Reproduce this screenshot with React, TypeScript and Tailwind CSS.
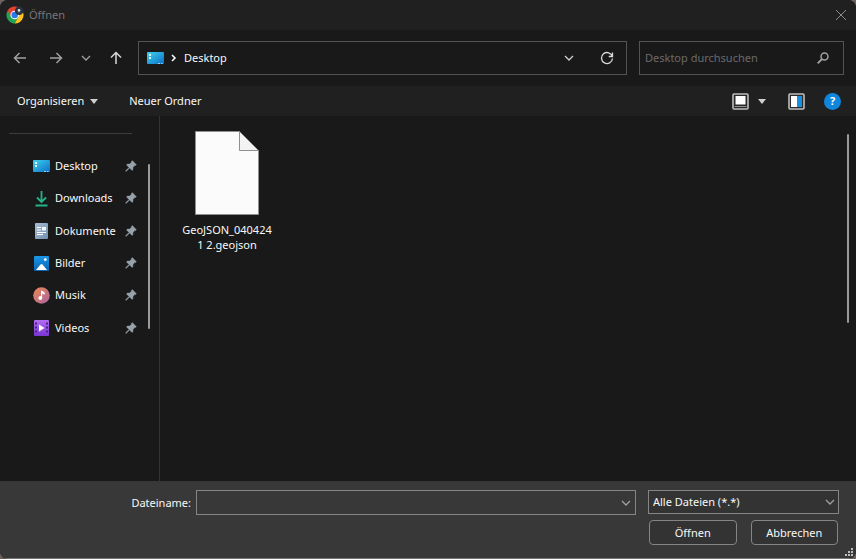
import type { ReactNode } from 'react';

interface Place {
  name: string;
  icon: ReactNode;
}

function ChromeIcon() {
  return (
    <svg width="18" height="18" viewBox="0 0 18 18" aria-hidden="true">
      <path d="M9 9 1.6 4.7A8.5 8.5 0 0 1 16.4 4.8L9 5Z" fill="#e8402f" />
      <path d="M9 9 1.6 4.7A8.5 8.5 0 0 0 8.6 17.5L12.6 11Z" fill="#1ea553" />
      <path d="M9 5H16.5A8.5 8.5 0 0 1 8.6 17.5L12.4 11Z" fill="#fcc31e" />
      <path d="M1.6 4.7 5.4 11 9 5V2L4 2.1Z" fill="#e8402f" />
      <circle cx="8.7" cy="9" r="4.3" fill="#fff" />
      <circle cx="8.7" cy="9" r="3.3" fill="#2a79e8" />
      <circle cx="13.2" cy="4.8" r="4.3" fill="#26323d" />
      <circle cx="13" cy="4.4" r="1.3" fill="#e4e9ee" />
      <path d="M10.7 7.6a2.9 2.9 0 0 1 4.8-.1" fill="none" stroke="#45535f" strokeWidth="1" />
    </svg>
  );
}

function DesktopIcon() {
  return (
    <svg width="17" height="12" viewBox="0 0 17 12" aria-hidden="true">
      <defs>
        <linearGradient id="desktop" x1="0" y1="0" x2="1" y2="1">
          <stop offset="0" stopColor="#3fd2ee" />
          <stop offset="1" stopColor="#0b6fc8" />
        </linearGradient>
      </defs>
      <rect width="17" height="12" rx="1" fill="url(#desktop)" />
      <path d="M2 2h2v2H2zM2 5h2v2H2z" fill="#e9fbff" />
      <path d="M11 11h2v1h-2zM14 11h1.500v1H14z" fill="#9bd4f5" />
    </svg>
  );
}

function DownloadIcon() {
  return (
    <svg width="17" height="17" viewBox="0 0 17 17" fill="none" stroke="#22b58c" aria-hidden="true">
      <path d="M8.500 1v10.500M4 7.500l4.500 4.500L13 7.500" strokeWidth="1.800" />
      <path d="M2.500 15.500h12" strokeWidth="1.800" />
    </svg>
  );
}

function DocumentIcon() {
  return (
    <svg width="17" height="17" viewBox="0 0 17 17" aria-hidden="true">
      <defs>
        <linearGradient id="doc" x1="0" y1="0" x2="1" y2="1">
          <stop offset="0" stopColor="#a9bdd2" />
          <stop offset="1" stopColor="#7290b0" />
        </linearGradient>
      </defs>
      <rect x="2" y="1" width="13" height="16" rx="1" fill="url(#doc)" />
      <path d="M4 5.500h4M4 8h4M4 10.500h9M4 12.500h6" stroke="#fff" strokeWidth="1" />
      <rect x="9" y="5" width="4" height="3.500" fill="#f4f8fc" />
    </svg>
  );
}

function PictureIcon() {
  return (
    <svg width="17" height="17" viewBox="0 0 17 17" aria-hidden="true">
      <defs>
        <linearGradient id="pic" x1="0" y1="0" x2="0" y2="1">
          <stop offset="0" stopColor="#1b97e6" />
          <stop offset="1" stopColor="#0963b5" />
        </linearGradient>
      </defs>
      <rect x="1" y="1" width="15" height="15" rx="1" fill="url(#pic)" />
      <path d="M3 15 7.500 9.500Q8.500 8.500 9.500 9.500L14 15Z" fill="#fff" />
      <circle cx="12.300" cy="4.600" r="1.400" fill="#fff" />
    </svg>
  );
}

function MusicIcon() {
  return (
    <svg width="17" height="17" viewBox="0 0 17 17" aria-hidden="true">
      <defs>
        <linearGradient id="music" x1="0" y1="0" x2="1" y2="1">
          <stop offset="0" stopColor="#ef8a55" />
          <stop offset="1" stopColor="#a8629f" />
        </linearGradient>
      </defs>
      <circle cx="8.500" cy="8.500" r="8.300" fill="url(#music)" />
      <circle cx="7.300" cy="11" r="1.900" fill="#fff" />
      <path d="M8.600 11V4l2.700 1.700v1.500L9.200 6" fill="#fff" stroke="#fff" strokeWidth="1" />
    </svg>
  );
}

function VideoIcon() {
  return (
    <svg width="17" height="17" viewBox="0 0 17 17" aria-hidden="true">
      <defs>
        <linearGradient id="video" x1="0" y1="0" x2="0" y2="1">
          <stop offset="0" stopColor="#b16cf2" />
          <stop offset="1" stopColor="#7a35d4" />
        </linearGradient>
      </defs>
      <rect x="1" y="1" width="15" height="16" rx="1" fill="url(#video)" />
      <path
        d="M2 3.500h2v2H2zM2 7.500h2v2H2zM2 11.500h2v2H2zM13 3.500h2v2h-2zM13 7.500h2v2h-2zM13 11.500h2v2h-2z"
        fill="#4a2280"
      />
      <path d="M6 5.500v7l5.500-3.500Z" fill="#fff" />
    </svg>
  );
}

function PinIcon() {
  return (
    <svg width="12" height="12" viewBox="0 0 12 12" aria-hidden="true">
      <path
        d="M7.300.6 11.400 4.700 10.500 5.600 9.800 5.500 8 7.400 7.900 9.700 7.100 10.500 4.600 8 1.400 11.200.7 11.300.8 10.600 4 7.400 1.500 4.900 2.300 4.100 4.600 4 6.500 2.200 6.400 1.500Z"
        fill="#98a2ab"
        stroke="#98a2ab"
        strokeWidth="0.400"
      />
    </svg>
  );
}

function Chevron({ className }: { className?: string }) {
  return (
    <svg width="10" height="10" viewBox="0 0 10 10" fill="none" stroke="currentColor" strokeWidth="1.300" className={className} aria-hidden="true">
      <path d="m1 3 4 4 4-4" />
    </svg>
  );
}

function Caret() {
  return (
    <svg width="8" height="5" viewBox="0 0 8 5" aria-hidden="true">
      <path d="M0 0h8L4 5Z" fill="#cfcfcf" />
    </svg>
  );
}

const places: Place[] = [
  { name: 'Desktop', icon: <DesktopIcon /> },
  { name: 'Downloads', icon: <DownloadIcon /> },
  { name: 'Dokumente', icon: <DocumentIcon /> },
  { name: 'Bilder', icon: <PictureIcon /> },
  { name: 'Musik', icon: <MusicIcon /> },
  { name: 'Videos', icon: <VideoIcon /> },
];

function TitleBar() {
  return (
    <header className="flex h-[30px] items-center justify-between bg-[#202020] pr-[9px] pl-[6px]">
      <div className="flex items-center gap-[5px]">
        <ChromeIcon />
        <h1 className="text-[#777777]">Öffnen</h1>
      </div>
      <button type="button" aria-label="Schließen" className="text-[#8c8c8c]">
        <svg width="12" height="12" viewBox="0 0 12 12" fill="none" stroke="currentColor" strokeWidth="1">
          <path d="m1 1 10 10M11 1 1 11" />
        </svg>
      </button>
    </header>
  );
}

function NavigationBar() {
  return (
    <nav className="flex h-14 items-center gap-[15px] bg-[#191919] pr-3 pl-[13px]">
      <div className="flex items-center gap-[18px]">
        <button type="button" aria-label="Zurück" className="text-[#a0a0a0]">
          <svg width="14" height="14" viewBox="0 0 14 14" fill="none" stroke="currentColor" strokeWidth="1.500">
            <path d="M13 7H1.500M6.500 2l-5 5 5 5" />
          </svg>
        </button>
        <button type="button" aria-label="Vorwärts" className="ml-1 text-[#a0a0a0]">
          <svg width="14" height="14" viewBox="0 0 14 14" fill="none" stroke="currentColor" strokeWidth="1.500">
            <path d="M1 7h11.500M7.500 2l5 5-5 5" />
          </svg>
        </button>
        <button type="button" aria-label="Zuletzt besucht" className="text-[#a0a0a0]">
          <Chevron />
        </button>
        <button type="button" aria-label="Nach oben" className="text-[#d8d8d8]">
          <svg width="14" height="14" viewBox="0 0 14 14" fill="none" stroke="currentColor" strokeWidth="1.500">
            <path d="M7 13V1.500M2 6.500l5-5 5 5" />
          </svg>
        </button>
      </div>
      <div className="flex flex-1 items-center gap-3">
        <div className="flex h-[34px] flex-1 items-center border border-[#535353] pr-3 pl-2">
          <DesktopIcon />
          <svg width="6" height="8" viewBox="0 0 6 8" fill="none" stroke="#ffffff" strokeWidth="1.500" className="mx-[7px]" aria-hidden="true">
            <path d="m1 1 3 3-3 3" />
          </svg>
          <button type="button" className="flex-1 text-left">Desktop</button>
          <button type="button" aria-label="Frühere Orte" className="mr-[26px] text-[#d0d0d0]">
            <Chevron />
          </button>
          <button type="button" aria-label="Aktualisieren" className="text-[#d8d8d8]">
            <svg width="14" height="14" viewBox="0 0 14 14" fill="none" stroke="currentColor" strokeWidth="1.300">
              <path d="M12.300 5.500A5.500 5.500 0 1 0 12.500 7.500M12.500 1.500v4H8.700" />
            </svg>
          </button>
        </div>
        <div className="flex h-[34px] w-[205px] items-center border border-[#535353] pr-[14px] pl-[5px]">
          <input
            type="search"
            aria-label="Desktop durchsuchen"
            placeholder="Desktop durchsuchen"
            className="min-w-0 flex-1 bg-transparent outline-none placeholder:text-[#6a6a6a]"
          />
          <svg width="12" height="12" viewBox="0 0 12 12" fill="none" stroke="#a0a0a0" strokeWidth="1.500" aria-hidden="true">
            <circle cx="7.500" cy="4.500" r="3.500" />
            <path d="M5 7 .7 11.300" strokeWidth="1.800" />
          </svg>
        </div>
      </div>
    </nav>
  );
}

function Toolbar() {
  return (
    <div className="flex h-[30px] items-center bg-[#202020] pr-[15px] pl-[17px]">
      <button type="button" className="flex items-center gap-[6px]">
        Organisieren
        <Caret />
      </button>
      <button type="button" className="ml-[31px]">Neuer Ordner</button>
      <div className="ml-auto flex items-center">
        <button type="button" aria-label="Ansicht">
          <svg width="17" height="17" viewBox="0 0 17 17" aria-hidden="true">
            <rect x="1" y="1" width="15" height="15" rx="1" fill="#2b2b2b" stroke="#bdbdbd" strokeWidth="1.600" />
            <rect x="3.500" y="3" width="10" height="8.500" fill="#fff" />
            <path d="M2.500 13.500h12" stroke="#8d8d8d" />
          </svg>
        </button>
        <button type="button" aria-label="Weitere Optionen" className="ml-[9px]">
          <Caret />
        </button>
        <button type="button" aria-label="Vorschaufenster" className="ml-[22px]">
          <svg width="17" height="17" viewBox="0 0 17 17" aria-hidden="true">
            <rect x="1" y="1" width="15" height="15" rx="1" fill="#2b2b2b" stroke="#bdbdbd" strokeWidth="1.600" />
            <rect x="3" y="3" width="6" height="11" fill="#fff" />
            <rect x="9" y="3" width="5" height="11" fill="#1590e0" />
          </svg>
        </button>
        <button
          type="button"
          aria-label="Hilfe"
          className="ml-[19px] flex size-[17px] items-center justify-center rounded-full bg-[#0f86dc] font-bold text-white"
        >
          ?
        </button>
      </div>
    </div>
  );
}

function Sidebar() {
  return (
    <aside className="flex w-40 shrink-0 border-r border-[#333333] pl-[9px]">
      <div className="flex-1 pt-[17px]">
        <hr className="mr-[5px] border-[#3c3c3c]" />
        <ul className="mt-4 grid h-[194px] auto-rows-fr">
          {places.map((place) => (
            <li key={place.name} className="flex items-center pl-6">
              <a href="#" className="flex flex-1 items-center gap-[5px]">
                <span className="flex w-[17px] justify-center">{place.icon}</span>
                {place.name}
              </a>
              <PinIcon />
            </li>
          ))}
        </ul>
      </div>
      <div className="mt-12 mr-[9px] ml-[11px] h-[165px] w-[2px] rounded-full bg-[#9a9a9a]" />
    </aside>
  );
}

function FileList() {
  return (
    <main className="flex flex-1 justify-between pr-[7px] pl-[18px]">
      <ul className="pt-[15px]">
        <li>
          <button type="button" className="flex w-[98px] flex-col items-center gap-[7px]">
            <svg width="64" height="84" viewBox="0 0 64 84" aria-hidden="true">
              <path d="M.5.500H44.500L63.500 19.500V83.500H.5Z" fill="#fbfbfb" stroke="#8f8f8f" />
              <path d="M44.500.500V19.500H63.500Z" fill="#f3f3f3" stroke="#8f8f8f" />
            </svg>
            <span className="leading-[15px]">
              GeoJSON_040424
              <br />1 2.geojson
            </span>
          </button>
        </li>
      </ul>
      <div className="mt-[18px] h-[189px] w-[2px] rounded-full bg-[#9a9a9a]" />
    </main>
  );
}

function Footer() {
  return (
    <footer className="relative flex h-[78px] items-start gap-3 border-b border-[#777777] bg-[#383838] pt-[9px] pr-[17px]">
      <div className="flex flex-1 items-center">
        <label htmlFor="filename" className="w-[196px] pr-[5px] text-right">Dateiname:</label>
        <div className="flex h-[25px] flex-1 items-center border border-[#858585] pr-1">
          <input id="filename" type="text" className="min-w-0 flex-1 bg-transparent px-1 outline-none" />
          <button type="button" aria-label="Frühere Dateinamen" className="text-[#a0a0a0]">
            <Chevron />
          </button>
        </div>
      </div>
      <div className="w-[191px]">
        <div className="relative">
          <select
            aria-label="Dateityp"
            className="block h-6 w-full appearance-none border border-[#858585] bg-[#333333] pr-5 pl-1 outline-none"
          >
            <option>Alle Dateien (*.*)</option>
          </select>
          <Chevron className="pointer-events-none absolute top-[7px] right-1 text-[#a0a0a0]" />
        </div>
        <div className="mt-[6px] flex gap-[14px] px-px">
          <button type="button" className="h-[25px] flex-1 rounded border border-[#858585] bg-[#333333]">Öffnen</button>
          <button type="button" className="h-[25px] flex-1 rounded border border-[#858585] bg-[#333333]">Abbrechen</button>
        </div>
      </div>
      <svg width="8" height="8" viewBox="0 0 8 8" className="absolute right-[3px] bottom-[2px]" aria-hidden="true">
        <path d="M6 0h2v2H6zM3 3h2v2H3zM6 3h2v2H6zM0 6h2v2H0zM3 6h2v2H3zM6 6h2v2H6z" fill="#bdbdbd" />
      </svg>
    </footer>
  );
}

export default function App() {
  return (
    <div className="min-h-screen bg-[#6b625e]">
      <div className="flex min-h-screen flex-col overflow-hidden rounded-lg bg-[#191919] font-['Noto_Sans','Open_Sans',sans-serif] text-[11px] leading-4 text-[#f8f8f8]">
        <TitleBar />
        <NavigationBar />
        <Toolbar />
        <div className="flex flex-1">
          <Sidebar />
          <FileList />
        </div>
        <Footer />
      </div>
    </div>
  );
}
